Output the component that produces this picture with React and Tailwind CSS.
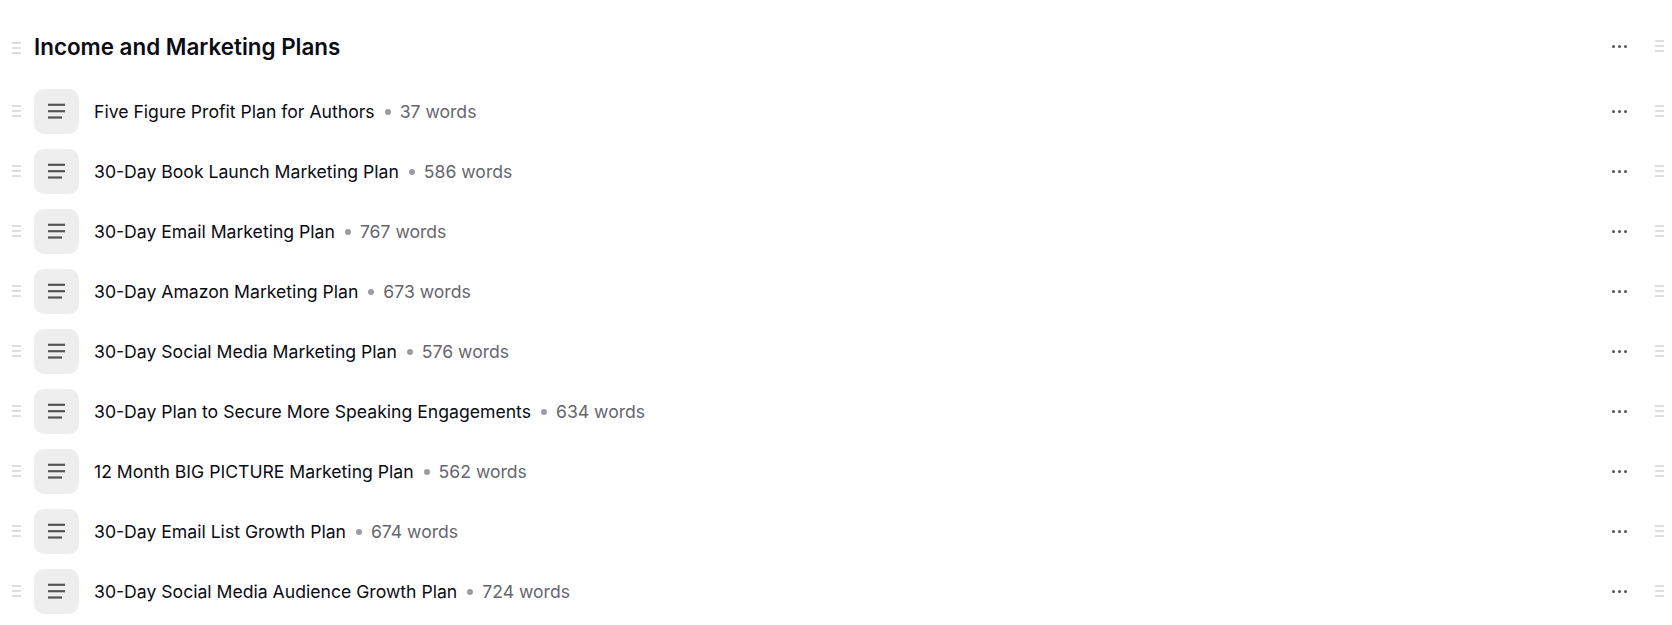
import React from "react";

const plans = [
  { title: "Five Figure Profit Plan for Authors", words: 37 },
  { title: "30-Day Book Launch Marketing Plan", words: 586 },
  { title: "30-Day Email Marketing Plan", words: 767 },
  { title: "30-Day Amazon Marketing Plan", words: 673 },
  { title: "30-Day Social Media Marketing Plan", words: 576 },
  { title: "30-Day Plan to Secure More Speaking Engagements", words: 634 },
  { title: "12 Month BIG PICTURE Marketing Plan", words: 562 },
  { title: "30-Day Email List Growth Plan", words: 674 },
  { title: "30-Day Social Media Audience Growth Plan", words: 724 },
];

function DragHandle() {
  return (
    <div className="flex w-[9px] shrink-0 flex-col gap-[3px]">
      <span className="h-[2px] bg-[#dedede]" />
      <span className="h-[2px] bg-[#dedede]" />
      <span className="h-[2px] bg-[#dedede]" />
    </div>
  );
}

function MoreDots() {
  return (
    <div className="mt-px flex shrink-0 gap-[3px]">
      <span className="size-[3px] rounded-full bg-[#555]" />
      <span className="size-[3px] rounded-full bg-[#555]" />
      <span className="size-[3px] rounded-full bg-[#555]" />
    </div>
  );
}

function DocIcon() {
  return (
    <div className="flex size-[45px] shrink-0 items-center justify-center rounded-[10px] bg-[#eeeeee]">
      <svg width="17" height="18" viewBox="0 0 17 18" fill="none" stroke="#555" strokeWidth="2.2">
        <path d="M0 2.8H17" />
        <path d="M0 9.2H17" />
        <path d="M0 15.5H14" />
      </svg>
    </div>
  );
}

function Row({ title, words }) {
  return (
    <div className="flex h-[60px] items-center pl-3 pr-2">
      <DragHandle />
      <div className="ml-[13px]">
        <DocIcon />
      </div>
      <span className="ml-[15px] pt-[2px] text-[17.62px] text-[#0b0b14]">{title}</span>
      <span className="ml-[10px] mr-[9px] mt-[2px] size-[6px] rounded-full bg-[#9b9ba3]" />
      <span className="pt-[2px] text-[17.6px] text-[#66666e]">{words} words</span>
      <div className="ml-auto flex items-center">
        <MoreDots />
        <div className="ml-[28px]">
          <DragHandle />
        </div>
      </div>
    </div>
  );
}

export default function App() {
  return (
    <div className="h-[625px] overflow-hidden bg-white font-['Inter',sans-serif]">
      <div className="mt-[23px] flex h-[46px] items-center pl-3 pr-2">
        <div className="mt-[4px]">
          <DragHandle />
        </div>
        <h2 className="ml-[13px] pt-px text-[22.4px] font-semibold text-[#0b0b14]">Income and Marketing Plans</h2>
        <div className="ml-auto flex items-center">
          <MoreDots />
          <div className="ml-[28px]">
            <DragHandle />
          </div>
        </div>
      </div>
      <div className="mt-[12px]">
        {plans.map((plan) => (
          <Row key={plan.title} title={plan.title} words={plan.words} />
        ))}
      </div>
    </div>
  );
}
